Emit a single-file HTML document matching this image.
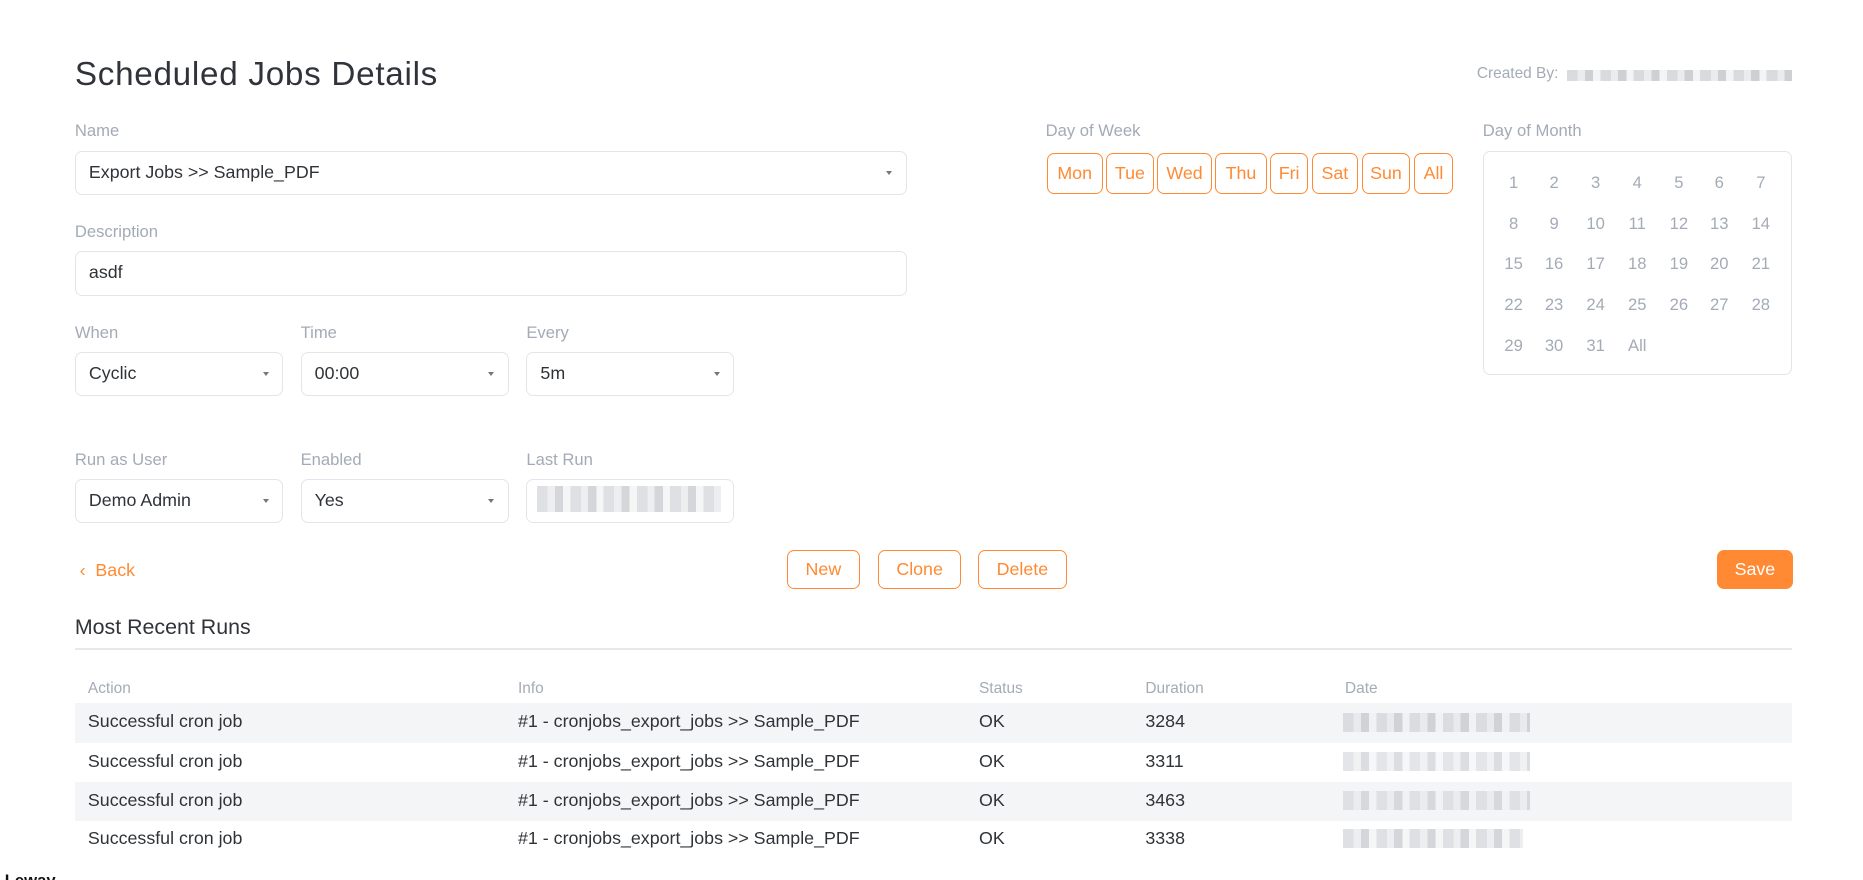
<!DOCTYPE html>
<html><head><meta charset="utf-8"><style>
html,body{margin:0;padding:0;background:#fff;overflow:hidden;width:1863px;height:880px}
#w{zoom:1.18814;position:relative;width:1568px;height:741px;font-family:"Liberation Sans",sans-serif;color:#2f3338}
.a{position:absolute;white-space:nowrap}
.lbl{font-size:14px;color:#a3abb6}
.box{position:absolute;border:1px solid #e2e5e9;border-radius:6px;height:36px;box-sizing:border-box;font-size:15px;line-height:34px;padding-left:11px;color:#2f3338}
.car{position:absolute;right:11px;top:16px;width:0;height:0;border-left:3px solid transparent;border-right:3px solid transparent;border-top:4px solid #777}
.ob{position:absolute;border:1px solid #ff8a33;color:#ff8a33;border-radius:6px;box-sizing:border-box;text-align:center;font-size:15px}
.blur{position:absolute;background:repeating-linear-gradient(90deg,#c9cbd0 0 9px,#e2e3e6 9px 15px,#b9bbc0 15px 22px,#eeeff1 22px 28px)}
.dm{position:absolute;font-size:14px;color:#a3abb6;width:30px;text-align:center}
.th{font-size:13px;color:#a3abb6}
.row{position:absolute;left:63px;width:1445px;height:33px;font-size:15px;line-height:31px}
.row span{position:absolute}
</style></head><body><div id="w">
<div class="a" style="left:63px;top:47px;font-size:28px;color:#30343a;letter-spacing:0.6px">Scheduled Jobs Details</div>
<div class="a" style="left:1243px;top:55px;font-size:13px;color:#a3abb6">Created By:</div>
<div class="blur" style="left:1319px;top:59px;width:189px;height:9px;opacity:.7"></div>

<div class="a lbl" style="left:63px;top:102px">Name</div>
<div class="box" style="left:63px;top:127px;width:700px;height:37px">Export Jobs &gt;&gt; Sample_PDF<div class="car"></div></div>
<div class="a lbl" style="left:63px;top:187px">Description</div>
<div class="box" style="left:63px;top:211px;width:700px;height:38px">asdf</div>

<div class="a lbl" style="left:63px;top:272px">When</div>
<div class="a lbl" style="left:253px;top:272px">Time</div>
<div class="a lbl" style="left:443px;top:272px">Every</div>
<div class="box" style="left:63px;top:296px;width:175px;height:37px">Cyclic<div class="car"></div></div>
<div class="box" style="left:253px;top:296px;width:175px;height:37px">00:00<div class="car"></div></div>
<div class="box" style="left:443px;top:296px;width:175px;height:37px">5m<div class="car"></div></div>

<div class="a lbl" style="left:63px;top:379px">Run as User</div>
<div class="a lbl" style="left:253px;top:379px">Enabled</div>
<div class="a lbl" style="left:443px;top:379px">Last Run</div>
<div class="box" style="left:63px;top:403px;width:175px;height:37px">Demo Admin<div class="car"></div></div>
<div class="box" style="left:253px;top:403px;width:175px;height:37px">Yes<div class="car"></div></div>
<div class="box" style="left:443px;top:403px;width:175px;height:37px"><div class="blur" style="left:8px;top:5px;width:155px;height:22px;opacity:.6"></div></div>

<div class="a" style="left:67px;top:471px;font-size:15px;color:#ff8a33">‹&nbsp; Back</div>
<div class="ob" style="left:662px;top:463px;width:62px;height:33px;line-height:31px">New</div>
<div class="ob" style="left:739px;top:463px;width:70px;height:33px;line-height:31px">Clone</div>
<div class="ob" style="left:823px;top:463px;width:75px;height:33px;line-height:31px">Delete</div>
<div class="ob" style="left:1445px;top:463px;width:64px;height:33px;line-height:31px;background:#ff8a33;color:#fff">Save</div>

<div class="a" style="left:63px;top:518px;font-size:18px;color:#30343a">Most Recent Runs</div>
<div class="a" style="left:63px;top:545px;width:1445px;height:2px;background:#e6e8eb"></div>
<div class="a th" style="left:74px;top:572px">Action</div>
<div class="a th" style="left:436px;top:572px">Info</div>
<div class="a th" style="left:824px;top:572px">Status</div>
<div class="a th" style="left:964px;top:572px">Duration</div>
<div class="a th" style="left:1132px;top:572px">Date</div>
<div class="row" style="top:592px;background:#f4f5f7"><span style="left:11px">Successful cron job</span><span style="left:373px">#1 - cronjobs_export_jobs &gt;&gt; Sample_PDF</span><span style="left:761px">OK</span><span style="left:901px">3284</span><div class="blur" style="left:1067px;top:8px;width:158px;height:16px;opacity:.6"></div></div>
<div class="row" style="top:625px"><span style="left:11px">Successful cron job</span><span style="left:373px">#1 - cronjobs_export_jobs &gt;&gt; Sample_PDF</span><span style="left:761px">OK</span><span style="left:901px">3311</span><div class="blur" style="left:1067px;top:8px;width:158px;height:16px;opacity:.5"></div></div>
<div class="row" style="top:658px;background:#f4f5f7"><span style="left:11px">Successful cron job</span><span style="left:373px">#1 - cronjobs_export_jobs &gt;&gt; Sample_PDF</span><span style="left:761px">OK</span><span style="left:901px">3463</span><div class="blur" style="left:1067px;top:8px;width:158px;height:16px;opacity:.5"></div></div>
<div class="row" style="top:690px"><span style="left:11px">Successful cron job</span><span style="left:373px">#1 - cronjobs_export_jobs &gt;&gt; Sample_PDF</span><span style="left:761px">OK</span><span style="left:901px">3338</span><div class="blur" style="left:1067px;top:8px;width:152px;height:16px;opacity:.6"></div></div>

<div class="a lbl" style="left:880px;top:102px">Day of Week</div>
<div class="ob" style="left:881px;top:129px;width:47px;height:34px;line-height:32px">Mon</div>
<div class="ob" style="left:931px;top:129px;width:40px;height:34px;line-height:32px">Tue</div>
<div class="ob" style="left:974px;top:129px;width:46px;height:34px;line-height:32px">Wed</div>
<div class="ob" style="left:1023px;top:129px;width:43px;height:34px;line-height:32px">Thu</div>
<div class="ob" style="left:1069px;top:129px;width:32px;height:34px;line-height:32px">Fri</div>
<div class="ob" style="left:1104px;top:129px;width:39px;height:34px;line-height:32px">Sat</div>
<div class="ob" style="left:1146px;top:129px;width:41px;height:34px;line-height:32px">Sun</div>
<div class="ob" style="left:1190px;top:129px;width:33px;height:34px;line-height:32px">All</div>

<div class="a lbl" style="left:1248px;top:102px">Day of Month</div>
<div class="a" style="left:1248px;top:127px;width:260px;height:189px;border:1px solid #e2e5e9;border-radius:6px;box-sizing:border-box"></div>
<div id="dm"></div>
<div class="a" style="left:4px;top:733px;font-size:14px;font-weight:bold;color:#111">Leway</div>
<script>
var xs=[1274,1308,1343,1378,1413,1447,1482],ys=[146,180,214,248,283],h='';
for(var i=1;i<=32;i++){var r=Math.floor((i-1)/7),c=(i-1)%7;h+='<div class="dm" style="left:'+(xs[c]-15)+'px;top:'+ys[r]+'px">'+(i==32?'All':i)+'</div>';}
document.getElementById('dm').innerHTML=h;
</script>
</div></body></html>
